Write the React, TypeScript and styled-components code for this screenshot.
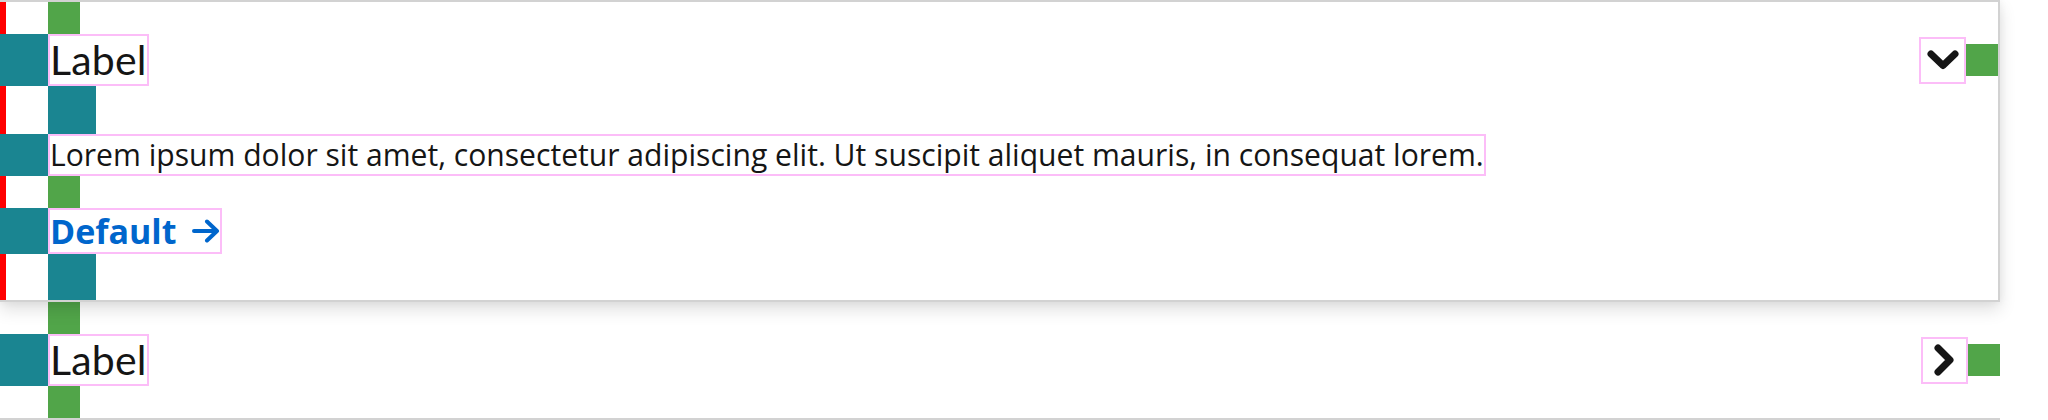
import React from "react";
import styled, { createGlobalStyle } from "styled-components";

const GlobalStyle = createGlobalStyle`
  html, body { margin: 0; padding: 0; background: #ffffff; }
  body { font-family: "Open Sans", "Noto Sans", sans-serif; color: #151515; }
`;

const TEAL = "#1a8591";
const GREEN = "#51a549";
const PINK = "#fcbdf8";

const List = styled.div`
  width: 2000px;
  display: flex;
  flex-direction: column;
`;

const Item = styled.section<{ $expanded?: boolean }>`
  position: relative;
  display: flex;
  flex-direction: column;
  border-bottom: 2px solid #d2d2d2;
  background: ${(p) =>
    p.$expanded ? "linear-gradient(to right, #ff0000 6px, #ffffff 6px)" : "transparent"};
  ${(p) =>
    p.$expanded
      ? `
    z-index: 1;
    border-top: 2px solid #d2d2d2;
    border-right: 2px solid #d2d2d2;
    box-shadow: 0 8px 16px 0 rgba(3, 3, 3, 0.12), 0 0 8px 0 rgba(3, 3, 3, 0.06);
  `
      : ""}
`;

const GreenPad = styled.div<{ $h?: number }>`
  width: 32px;
  height: ${(p) => p.$h ?? 32}px;
  margin-left: 48px;
  background: ${GREEN};
  flex: none;
`;

const TealPad = styled.div<{ $h?: number }>`
  width: 48px;
  height: ${(p) => p.$h ?? 48}px;
  margin-left: 48px;
  background: ${TEAL};
  flex: none;
`;

const Row = styled.div`
  display: flex;
  align-items: stretch;
`;

const Indent = styled.div`
  width: 48px;
  flex: none;
  background: ${TEAL};
`;

const HeaderRow = styled(Row)`
  height: 52px;
`;

const Box = styled.div`
  border: 2px solid ${PINK};
  display: flex;
  align-items: center;
  box-sizing: border-box;
`;

const LabelBox = styled(Box)`
  font-family: "Lato", "Noto Sans", sans-serif;
  font-size: 41px;
  line-height: 48px;
  color: #151515;
  letter-spacing: 0.2px;
`;

const BodyBox = styled(Box)`
  height: 42px;
  font-family: "Open Sans", "Noto Sans", sans-serif;
  font-size: 30.1px;
  line-height: 38px;
  color: #151515;
`;

const LinkBox = styled(Box)`
  height: 46px;
  gap: 16px;
  font-family: "Open Sans", "Noto Sans", sans-serif;
  font-weight: 700;
  font-size: 34px;
  line-height: 42px;
  color: #0066cc;
`;

const Fill = styled.div`
  flex: 1;
`;

const ToggleSide = styled.div`
  display: flex;
  align-items: center;
`;

const ToggleBox = styled(Box)`
  width: 47px;
  height: 47px;
  justify-content: center;
`;

const SideGreen = styled.div`
  width: 32px;
  height: 32px;
  background: ${GREEN};
`;

const ChevronDown = () => (
  <svg width="32" height="20" viewBox="0 0 32 20" fill="none">
    <polyline
      points="4,4 16,15.5 28,4"
      stroke="#151515"
      strokeWidth="7"
      strokeLinecap="round"
      strokeLinejoin="round"
    />
  </svg>
);

const ChevronRight = () => (
  <svg width="22" height="32" viewBox="0 0 22 32" fill="none">
    <polyline
      points="4,4 16,16 4,28"
      stroke="#151515"
      strokeWidth="7"
      strokeLinecap="round"
      strokeLinejoin="round"
    />
  </svg>
);

const ArrowRight = () => (
  <svg width="28" height="24" viewBox="0 0 28 24" fill="none">
    <path
      d="M2 12 H25 M15 2.5 L25 12 L15 21.5"
      stroke="#0066cc"
      strokeWidth="4"
      strokeLinecap="round"
      strokeLinejoin="round"
    />
  </svg>
);

type HeaderProps = { label: string; expanded?: boolean };

const Header = ({ label, expanded }: HeaderProps) => (
  <HeaderRow>
    <Indent />
    <LabelBox>{label}</LabelBox>
    <Fill />
    <ToggleSide>
      <ToggleBox>{expanded ? <ChevronDown /> : <ChevronRight />}</ToggleBox>
      <SideGreen />
    </ToggleSide>
  </HeaderRow>
);

export default function App() {
  return (
    <>
      <GlobalStyle />
      <List>
        <Item $expanded>
          <GreenPad />
          <Header label="Label" expanded />
          <TealPad />
          <Row>
            <Indent />
            <BodyBox>
              Lorem ipsum dolor sit amet, consectetur adipiscing elit. Ut suscipit aliquet mauris, in consequat lorem.
            </BodyBox>
          </Row>
          <GreenPad />
          <Row>
            <Indent />
            <LinkBox>
              Default
              <ArrowRight />
            </LinkBox>
          </Row>
          <TealPad $h={46} />
        </Item>
        <Item>
          <GreenPad />
          <Header label="Label" />
          <GreenPad />
        </Item>
      </List>
    </>
  );
}
